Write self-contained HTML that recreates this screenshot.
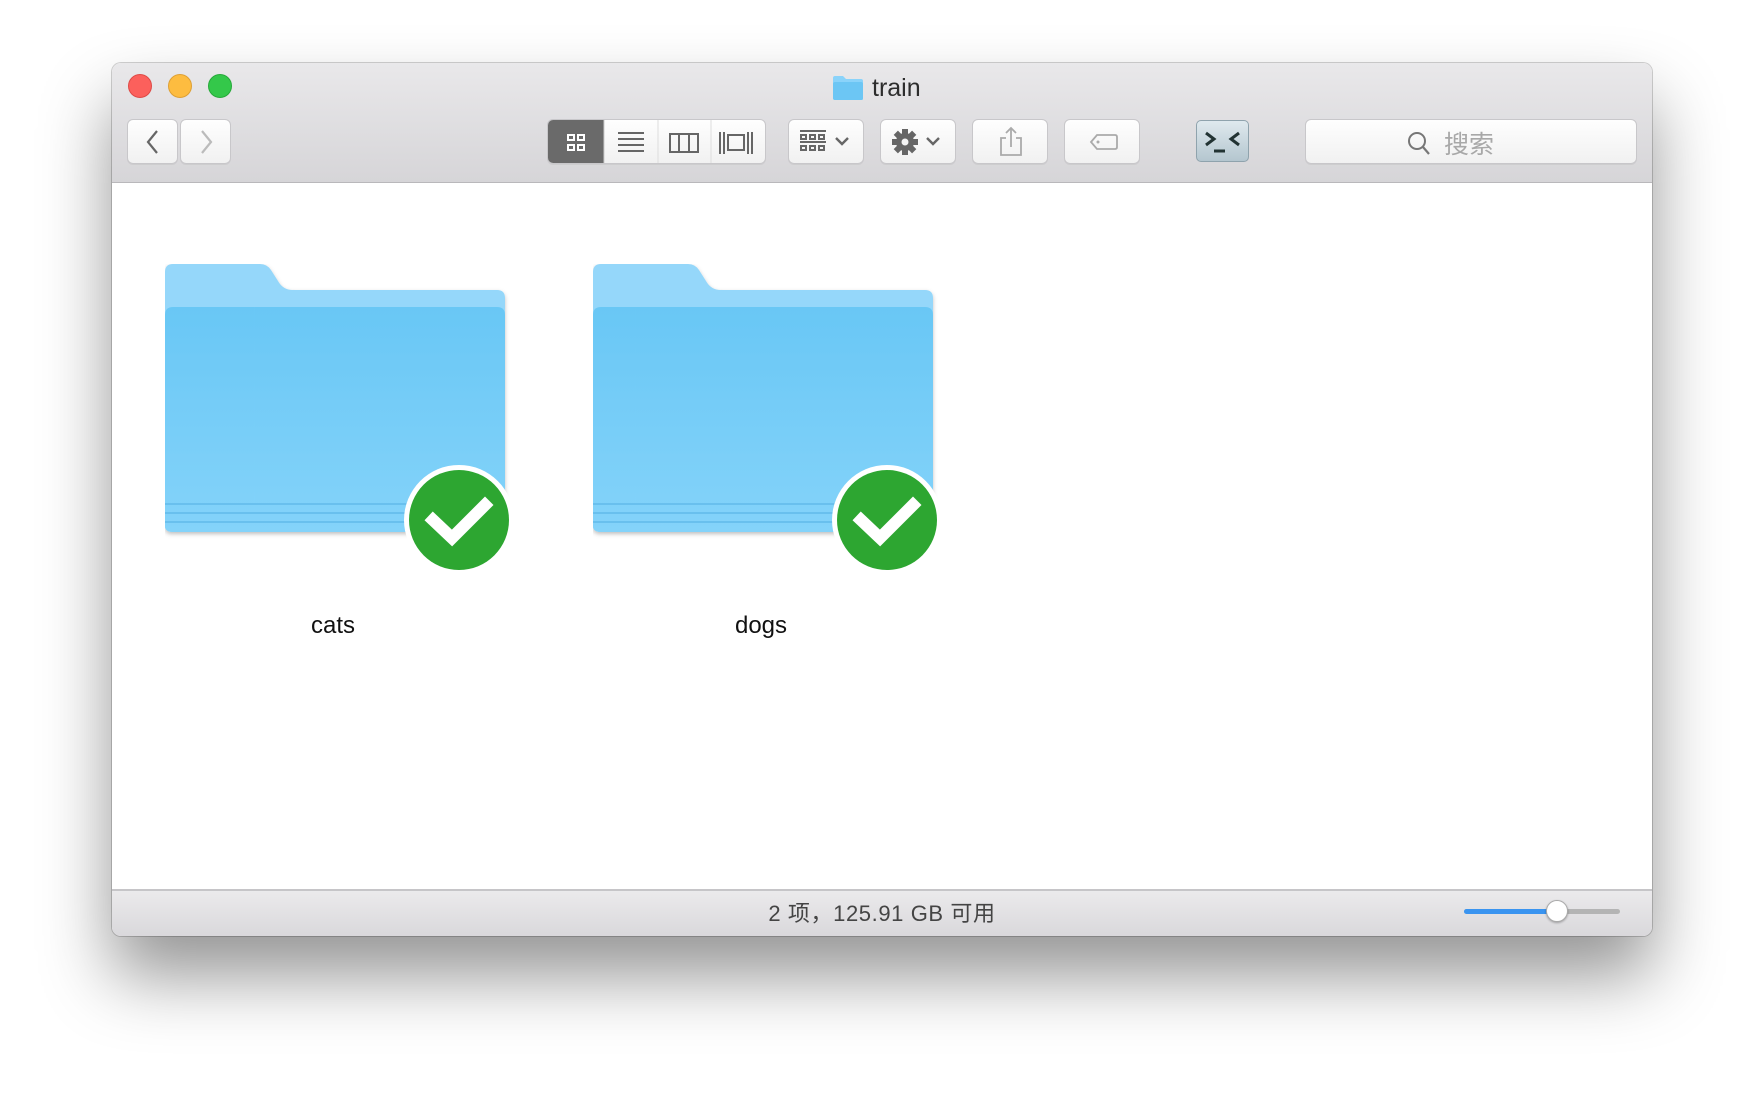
<!DOCTYPE html>
<html><head><meta charset="utf-8"><style>
*{margin:0;padding:0;box-sizing:border-box}
body{width:1764px;height:1096px;background:#fff;position:relative;overflow:hidden;font-family:"Liberation Sans","Noto Sans CJK SC",sans-serif}
.win{position:absolute;left:112px;top:63px;width:1540px;height:873px;border-radius:9px;background:#fff;box-shadow:0 40px 70px rgba(0,0,0,0.42),0 0 0 1px rgba(0,0,0,0.18);overflow:hidden}
.tb{position:absolute;left:0;top:0;width:100%;height:120px;background:linear-gradient(#e9e8ea,#d6d5d8);border-bottom:1px solid #b9b8bb}
.sb{position:absolute;left:0;bottom:0;width:100%;height:47px;background:linear-gradient(#ebeaec,#d9d8db);border-top:2px solid #c6c5c8}
.tl{position:absolute;top:11px;width:24px;height:24px;border-radius:50%}
.btn{position:absolute;top:56px;height:45px;background:linear-gradient(#fefefe,#f1f1f1);border:1px solid #c8c7ca;border-radius:6px;box-shadow:0 1px 0 rgba(0,0,0,0.05)}
.abs{position:absolute}
.lbl{position:absolute;top:549px;font-size:24px;color:#111;width:200px;text-align:center}
</style></head><body>
<div class="win">
 <div class="tb">
  <div class="tl" style="left:16px;background:#fc605c;border:1px solid #de4a46"></div>
  <div class="tl" style="left:56px;background:#fdbc40;border:1px solid #dea034"></div>
  <div class="tl" style="left:96px;background:#34c84a;border:1px solid #27a93a"></div>
  <svg class="abs" style="left:720px;top:12px" width="32" height="26"><path d="M1 3 Q1 1 3 1 H11 L14 4 H29 Q31 4 31 6 V24 Q31 25 29 25 H3 Q1 25 1 23Z" fill="#8ad3fa"/><rect x="1" y="7" width="30" height="18" rx="2" fill="#6cc6f4"/></svg>
  <div class="abs" style="left:760px;top:11px;font-size:25px;color:#2d2d2d">train</div>
  <div class="btn" style="left:15px;width:51px"><svg width="51" height="45"><path d="M29 11 L20 22 L29 33" stroke="#666" stroke-width="2.2" fill="none"/></svg></div>
  <div class="btn" style="left:68px;width:51px"><svg width="51" height="45"><path d="M21 11 L30 22 L21 33" stroke="#bbb" stroke-width="2.2" fill="none"/></svg></div>
  <div class="btn" style="left:435px;width:219px;overflow:hidden">
   <div class="abs" style="left:0;top:0;width:56px;height:45px;background:#6a6a6a"></div>
   <svg class="abs" style="left:0;top:0" width="219" height="45">
    <g fill="none" stroke="#fff" stroke-width="2"><rect x="20" y="15" width="6" height="5"/><rect x="30" y="15" width="6" height="5"/><rect x="20" y="25" width="6" height="5"/><rect x="30" y="25" width="6" height="5"/></g>
    <line x1="56" y1="0" x2="56" y2="45" stroke="#ccc"/><line x1="110" y1="0" x2="110" y2="45" stroke="#ddd"/><line x1="163" y1="0" x2="163" y2="45" stroke="#ddd"/>
    <g stroke="#666" stroke-width="2"><line x1="70" y1="13" x2="96" y2="13"/><line x1="70" y1="19" x2="96" y2="19"/><line x1="70" y1="25" x2="96" y2="25"/><line x1="70" y1="31" x2="96" y2="31"/></g>
    <g fill="none" stroke="#666" stroke-width="2"><rect x="122" y="14" width="28" height="18"/><line x1="131" y1="14" x2="131" y2="32"/><line x1="141" y1="14" x2="141" y2="32"/>
    <rect x="180" y="15" width="16" height="15"/><line x1="172" y1="12" x2="172" y2="34"/><line x1="176" y1="12" x2="176" y2="34"/><line x1="200" y1="12" x2="200" y2="34"/><line x1="204" y1="12" x2="204" y2="34"/></g>
   </svg></div>
  <div class="btn" style="left:676px;width:76px"><svg width="76" height="45"><g stroke="#666" stroke-width="2" fill="none"><line x1="11" y1="11" x2="37" y2="11"/><line x1="11" y1="22" x2="37" y2="22"/><rect x="12" y="15" width="5" height="4"/><rect x="21" y="15" width="5" height="4"/><rect x="30" y="15" width="5" height="4"/><rect x="12" y="26" width="5" height="4"/><rect x="21" y="26" width="5" height="4"/><rect x="30" y="26" width="5" height="4"/><path d="M47 18 L53 24 L59 18" stroke-width="2.4"/></g></svg></div>
  <div class="btn" style="left:768px;width:76px"><svg width="76" height="45"><g transform="translate(24 22)" fill="#666"><circle r="9"/><rect x="-3" y="-13" width="6" height="26"/><rect x="-3" y="-13" width="6" height="26" transform="rotate(45)"/><rect x="-3" y="-13" width="6" height="26" transform="rotate(90)"/><rect x="-3" y="-13" width="6" height="26" transform="rotate(135)"/><circle r="3.5" fill="#f3f3f3"/></g><path d="M46 18 L52 24 L58 18" stroke="#666" stroke-width="2.4" fill="none"/></svg></div>
  <div class="btn" style="left:860px;width:76px"><svg width="76" height="45"><g stroke="#aaa" stroke-width="1.8" fill="none"><path d="M33 18 H28 V35 H48 V18 H43"/><line x1="38" y1="8" x2="38" y2="27"/><path d="M33 13 L38 8 L43 13"/></g></svg></div>
  <div class="btn" style="left:952px;width:76px"><svg width="76" height="45"><path d="M26 22 L32 15 H50 Q52 15 52 17 V27 Q52 29 50 29 H32Z" stroke="#aaa" stroke-width="1.8" fill="none"/><circle cx="33" cy="22" r="1.5" fill="#aaa"/></svg></div>
  <div class="abs" style="left:1084px;top:57px;width:53px;height:42px;border-radius:5px;background:linear-gradient(#dfe9ee,#b4c6cf);border:1px solid #8fa3ad"><svg width="53" height="42"><g stroke="#233" stroke-width="3" fill="none"><path d="M9 12 L17 18 L9 24"/><path d="M42 12 L34 18 L42 24"/><line x1="17" y1="30" x2="28" y2="30"/></g></svg></div>
  <div class="btn" style="left:1193px;width:332px"><svg class="abs" style="left:100px;top:10px" width="30" height="28"><circle cx="11" cy="11" r="8" stroke="#777" stroke-width="2" fill="none"/><line x1="17" y1="17" x2="23" y2="24" stroke="#777" stroke-width="2.2"/></svg><div class="abs" style="left:138px;top:5px;font-size:25px;color:#a8a8a8">搜索</div></div>
 </div>
 <svg class="abs" style="left:53px;top:201px" width="400" height="320"><defs><linearGradient id="g" x1="0" y1="0" x2="0" y2="1"><stop offset="0" stop-color="#69c7f5"/><stop offset="1" stop-color="#84d3fa"/></linearGradient><filter id="s"><feDropShadow dx="0" dy="2" stdDeviation="2" flood-opacity="0.25"/></filter></defs>
  <g filter="url(#s)"><path d="M0 8 Q0 0 8 0 H95 Q102 0 106 6 L113 17 Q118 26 128 26 H332 Q340 26 340 34 V262 Q340 268 332 268 H8 Q0 268 0 262Z" fill="#95d7fa"/>
  <path d="M0 51 Q0 43 8 43 H332 Q340 43 340 51 V262 Q340 268 332 268 H8 Q0 268 0 262Z" fill="url(#g)"/></g>
  <g stroke="#69c0ee" stroke-width="2"><line x1="0" y1="240" x2="340" y2="240"/><line x1="0" y1="249" x2="340" y2="249"/><line x1="0" y1="258" x2="340" y2="258"/></g>
  <circle cx="294" cy="256" r="55" fill="#fff"/><circle cx="294" cy="256" r="50" fill="#2da631"/>
  <path d="M268 256 L287 274 L320 241" stroke="#fff" stroke-width="12" fill="none" stroke-linecap="square"/>
 </svg>
 <svg class="abs" style="left:481px;top:201px" width="400" height="320">
  <g filter="url(#s)"><path d="M0 8 Q0 0 8 0 H95 Q102 0 106 6 L113 17 Q118 26 128 26 H332 Q340 26 340 34 V262 Q340 268 332 268 H8 Q0 268 0 262Z" fill="#95d7fa"/>
  <path d="M0 51 Q0 43 8 43 H332 Q340 43 340 51 V262 Q340 268 332 268 H8 Q0 268 0 262Z" fill="url(#g)"/></g>
  <g stroke="#69c0ee" stroke-width="2"><line x1="0" y1="240" x2="340" y2="240"/><line x1="0" y1="249" x2="340" y2="249"/><line x1="0" y1="258" x2="340" y2="258"/></g>
  <circle cx="294" cy="256" r="55" fill="#fff"/><circle cx="294" cy="256" r="50" fill="#2da631"/>
  <path d="M268 256 L287 274 L320 241" stroke="#fff" stroke-width="12" fill="none" stroke-linecap="square"/>
 </svg>
 <div class="lbl" style="left:121px">cats</div>
 <div class="lbl" style="left:549px">dogs</div>
 <div class="sb">
  <div class="abs" style="left:0;width:100%;top:5px;text-align:center;font-size:22px;letter-spacing:0.6px;color:#444">2 项，125.91 GB 可用</div>
  <div class="abs" style="left:1352px;top:18px;width:156px;height:5px;border-radius:3px;background:#b4b4b4"></div>
  <div class="abs" style="left:1352px;top:18px;width:92px;height:5px;border-radius:3px;background:#3a94f0"></div>
  <div class="abs" style="left:1434px;top:9px;width:22px;height:22px;border-radius:50%;background:#fff;border:1px solid #aaa;box-shadow:0 1px 2px rgba(0,0,0,.3)"></div>
 </div>
</div>
</body></html>
